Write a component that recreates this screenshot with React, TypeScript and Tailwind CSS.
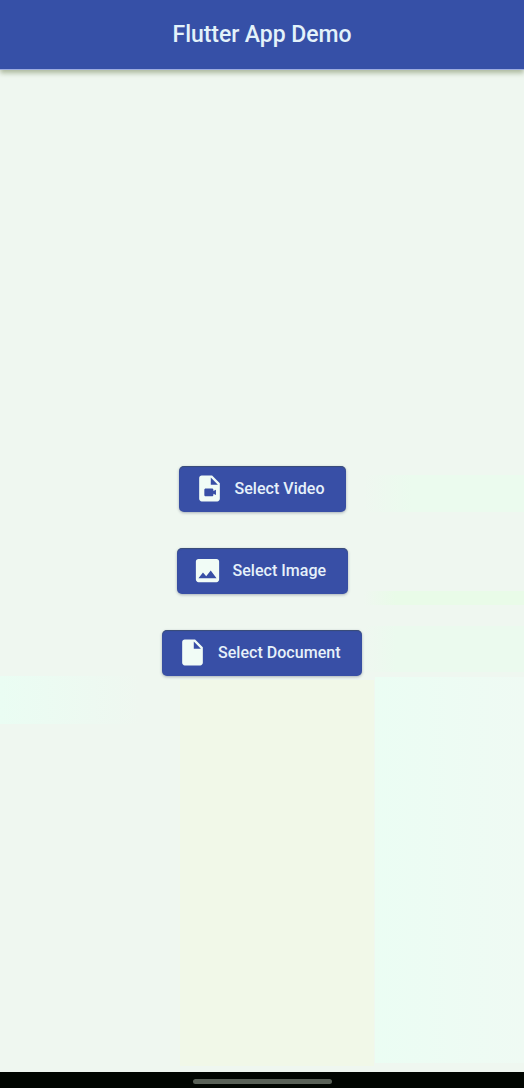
import type { ReactNode } from "react";

function Icon({ d }: { d: string }) {
  return (
    <svg viewBox="0 0 24 24" className="-mt-px size-[31px] shrink-0 fill-[#f1fcf6]" aria-hidden="true">
      <path d={d} />
    </svg>
  );
}

const icons = {
  video:
    "M14 2H6c-1.1 0-1.99.9-1.99 2L4 20c0 1.1.89 2 1.99 2H18c1.1 0 2-.9 2-2V8l-6-6zm-1 7V3.5L18.5 9H13zm2 5 2-1.06v4.12L15 16v1c0 .55-.45 1-1 1H9c-.55 0-1-.45-1-1v-4c0-.55.45-1 1-1h5c.55 0 1 .45 1 1v1z",
  image:
    "M21 19V5c0-1.1-.9-2-2-2H5c-1.1 0-2 .9-2 2v14c0 1.1.9 2 2 2h14c1.1 0 2-.9 2-2zM8.5 13.5l2.5 3.01L14.5 12l4.5 6H5l3.5-4.5z",
  document:
    "M6 2c-1.1 0-1.99.9-1.99 2L4 20c0 1.1.89 2 1.99 2H18c1.1 0 2-.9 2-2V8l-6-6H6zm7 7V3.5L18.5 9H13z",
};

function PickerButton({ icon, width, children }: { icon: string; width: string; children: ReactNode }) {
  return (
    <button
      type="button"
      className={`flex h-[46px] items-center gap-[10px] rounded-[5px] bg-[#384fa6] pl-[15px] text-base font-medium tracking-[0.03px] whitespace-nowrap text-[#e6f1fa] shadow-[0_1px_3px_rgba(60,70,100,0.4),inset_0_1px_1px_rgba(60,75,85,0.6)] ${width}`}
    >
      <Icon d={icon} />
      <span>{children}</span>
    </button>
  );
}

export default function App() {
  return (
    <div className="flex h-[1088px] w-[524px] flex-col overflow-hidden bg-[#eff7f0] font-['Roboto',sans-serif]">
      <header className="z-10 flex h-[70px] shrink-0 items-center justify-center border-b border-[#9dace0] bg-[#3650a7] shadow-[0_3px_5px_rgba(125,140,100,0.6)]">
        <h1 className="text-[23px] leading-7 font-medium tracking-[-0.06px] text-[#e3f2fa]">Flutter App Demo</h1>
      </header>
      <main className="flex flex-1 flex-col items-center bg-[linear-gradient(#f1f8e8,#f1f8e8),linear-gradient(90deg,#ebfdf3,#effaf3),linear-gradient(90deg,#eff7f0,#ebfbee_30%),linear-gradient(90deg,#eff7f0,#e9fbe8_20%),linear-gradient(90deg,#eff7f0,#ebfaee_20%),linear-gradient(90deg,#eafdf3,#eff7f0)] bg-[size:194px_386px,149px_386px,160px_37px,160px_14px,160px_46px,140px_48px] bg-[position:180px_610px,375px_607px,364px_405px,364px_521px,364px_556px,0px_606px] bg-no-repeat pt-[396px]">
        <div className="flex flex-col items-center gap-9">
          <PickerButton icon={icons.video} width="w-[167px]">Select Video</PickerButton>
          <PickerButton icon={icons.image} width="w-[171px]">Select Image</PickerButton>
          <PickerButton icon={icons.document} width="w-[200px]">Select Document</PickerButton>
        </div>
      </main>
      <footer className="flex h-4 shrink-0 justify-center bg-[#010601] pt-[7px]">
        <div className="h-[5px] w-[139px] rounded-full bg-[#596157]" />
      </footer>
    </div>
  );
}
